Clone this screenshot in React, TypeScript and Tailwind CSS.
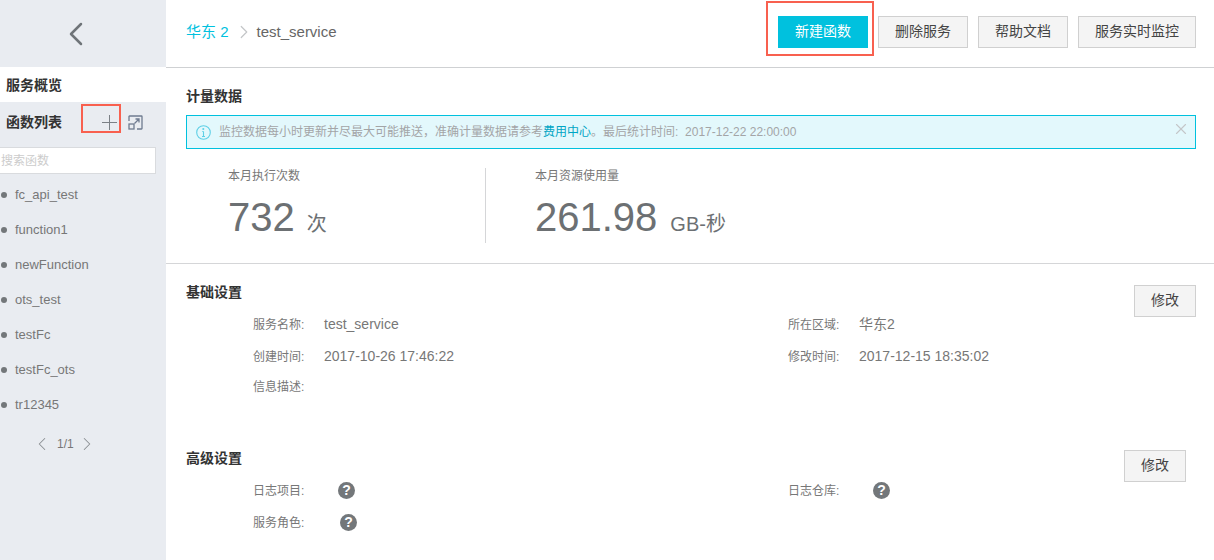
import { ChevronLeft, ChevronRight, X } from "lucide-react";

const fns = ["fc_api_test", "function1", "newFunction", "ots_test", "testFc", "testFc_ots", "tr12345"];

const font = { fontFamily: '"Liberation Sans", "Noto Sans CJK SC", sans-serif' };

const Field = ({ label, value }: { label: string; value: string }) => (
  <div className="flex h-4 items-center">
    <span className="w-[51px] shrink-0 whitespace-nowrap pt-[2px] text-xs text-[#777]">{label}</span>
    <span className="ml-[20px] whitespace-nowrap text-sm text-[#777]">{value}</span>
  </div>
);

const Help = ({ label, offset }: { label: string; offset: string }) => (
  <div className="flex h-4 items-center">
    <span className="w-[51px] shrink-0 whitespace-nowrap pt-[2px] text-xs text-[#777]">{label}</span>
    <span className={`${offset} flex h-[17px] w-[17px] shrink-0 items-center justify-center rounded-full bg-[#73777a] text-sm font-bold text-white`}>?</span>
  </div>
);

const GrayButton = ({ children, className }: { children: string; className: string }) => (
  <button className={`${className} h-8 border border-[#d0d0d0] bg-[#f4f4f4] pb-[2px] text-sm text-[#444]`}>{children}</button>
);

export default function App() {
  return (
    <div className="relative flex h-[560px] w-[1214px] overflow-hidden bg-white" style={font}>
      {/* Sidebar */}
      <aside className="w-[166px] shrink-0 bg-[#e9ecf1]">
        <div className="flex h-[67px] items-center pl-[56px]">
          <ChevronLeft className="h-10 w-10 text-[#6f7479]" strokeWidth={1.5} />
        </div>
        <div className="flex h-[35px] items-center bg-white pl-[6px] text-sm font-bold text-[#333]">服务概览</div>
        <div className="flex h-[40px] items-center pl-[6px] text-sm font-bold text-[#333]">
          <span className="w-[96px]">函数列表</span>
          <svg className="h-[15px] w-[15px]" viewBox="0 0 15 15" fill="none" stroke="#7b8086" strokeWidth="1">
            <path d="M7.5 0v15M0 7.5h15" />
          </svg>
          <svg className="ml-[11px] h-[15px] w-[15px]" viewBox="0 0 15 15" fill="none" stroke="#6f7b90" strokeWidth="1.3">
            <path d="M1 6V1.5a.5.5 0 0 1 .5-.5h12a.5.5 0 0 1 .5.5v12a.5.5 0 0 1-.5.5H9" />
            <rect x="1" y="9" width="5" height="5" />
            <path d="M6.5 8.5L11 4M7.5 4H11v3.5" />
          </svg>
        </div>
        <div className="mb-[3px] ml-[-2px] mt-[5px] flex h-[27px] w-[158px] items-center border border-[#d9dbde] bg-white pl-[2px] text-xs text-[#ccc]">搜索函数</div>
        <ul>
          {fns.map((f) => (
            <li key={f} className="flex h-[35px] items-center text-[13px] text-[#777]">
              <span className="ml-[1px] h-[6px] w-[6px] rounded-full bg-[#73777a]" />
              <span className="ml-[8px]">{f}</span>
            </li>
          ))}
        </ul>
        <div className="mt-[11px] flex h-[22px] items-center pl-[31px] text-xs text-[#777]">
          <ChevronLeft className="h-[22px] w-[22px] text-[#8a8e92]" strokeWidth={1.1} />
          <span className="ml-[4px]">1/1</span>
          <ChevronRight className="ml-[2px] h-[22px] w-[22px] text-[#8a8e92]" strokeWidth={1.1} />
        </div>
      </aside>

      {/* Main */}
      <main className="min-w-0 flex-1">
        <header className="flex h-[68px] items-center border-b border-[#cfd1d3] pb-[3px] pl-[20px] pr-[18px]">
          <span className="text-[15px] text-[#00c1de]">华东 2</span>
          <ChevronRight className="ml-[4px] h-[22px] w-[22px] text-[#c4c6c8]" strokeWidth={1.3} />
          <span className="ml-[2px] text-[15px] text-[#666]">test_service</span>
          <div className="ml-auto flex gap-[10px]">
            <button className="h-8 w-[90px] bg-[#00c1de] pb-[2px] text-sm text-white">新建函数</button>
            <GrayButton className="w-[90px]">删除服务</GrayButton>
            <GrayButton className="w-[90px]">帮助文档</GrayButton>
            <GrayButton className="w-[118px]">服务实时监控</GrayButton>
          </div>
        </header>

        <section className="h-[196px] border-b border-[#d5d6d8] pl-[20px] pr-[18px] pt-[20px]">
          <h2 className="text-sm leading-4 font-bold text-[#333]">计量数据</h2>
          <div className="mt-[11px] flex h-[34px] items-center border border-[#00c1de] bg-[#e3f8fc] pl-[9px] pr-[5px] text-xs text-[#a3a5a7]">
            <svg className="h-[15px] w-[15px] shrink-0" viewBox="0 0 15 15" fill="none" stroke="#5fd0e6" strokeWidth="1.1">
              <circle cx="7.5" cy="7.5" r="6.8" />
              <path d="M7.5 6.5v5M6 11.5h3M6.3 6.5h1.2" />
              <circle cx="7.3" cy="4" r="0.5" />
            </svg>
            <span className="ml-[8px] whitespace-nowrap">
              监控数据每小时更新并尽最大可能推送，准确计量数据请参考<span className="text-[#00a5c4]">费用中心</span>。最后统计时间:&nbsp; 2017-12-22 22:00:00
            </span>
            <X className="ml-auto h-[18px] w-[18px] -translate-y-[3px] text-[#c4c6c8]" strokeWidth={1.5} />
          </div>
          <div className="mt-[19px] flex">
            <div className="h-[75px] w-[300px] border-r border-[#d5d6d8] pl-[42px] pt-[1px]">
              <p className="text-xs leading-[14px] text-[#777]">本月执行次数</p>
              <p className="mt-[9px] text-[40px] leading-[50px] text-[#6c7073]">
                732<span className="ml-[12px] text-xl text-[#6c7073]">次</span>
              </p>
            </div>
            <div className="pl-[49px] pt-[1px]">
              <p className="text-xs leading-[14px] text-[#777]">本月资源使用量</p>
              <p className="mt-[9px] text-[40px] leading-[50px] text-[#6c7073]">
                261.98<span className="ml-[13px] text-xl text-[#6c7073]">GB-秒</span>
              </p>
            </div>
          </div>
        </section>

        <section className="h-[166px] pl-[20px] pr-[18px] pt-[21px]">
          <div className="flex items-start justify-between">
            <h2 className="mt-[-1px] text-sm leading-4 font-bold text-[#333]">基础设置</h2>
            <GrayButton className="w-[62px]">修改</GrayButton>
          </div>
          <div className="mt-[-1px] grid grid-cols-[535px_1fr] grid-rows-[32px_30px_16px] pl-[67px]">
            <Field label="服务名称:" value="test_service" />
            <Field label="所在区域:" value="华东2" />
            <Field label="创建时间:" value="2017-10-26 17:46:22" />
            <Field label="修改时间:" value="2017-12-15 18:35:02" />
            <Field label="信息描述:" value="" />
          </div>
        </section>

        <section className="pl-[20px] pr-[28px] pt-[20px]">
          <div className="flex items-start justify-between">
            <h2 className="text-sm leading-4 font-bold text-[#333]">高级设置</h2>
            <GrayButton className="w-[62px]">修改</GrayButton>
          </div>
          <div className="mt-0 grid grid-cols-[535px_1fr] gap-y-[16px] pl-[67px]">
            <Help label="日志项目:" offset="ml-[34px]" />
            <Help label="日志仓库:" offset="ml-[34px]" />
            <Help label="服务角色:" offset="ml-[36px]" />
          </div>
        </section>
      </main>

      {/* Red annotation boxes */}
      <div className="absolute left-[81px] top-[104px] h-[29px] w-[40px] border-2 border-[#f8604f]" />
      <div className="absolute left-[766px] top-[1px] h-[55px] w-[108px] border-2 border-[#f8604f]" />
    </div>
  );
}
